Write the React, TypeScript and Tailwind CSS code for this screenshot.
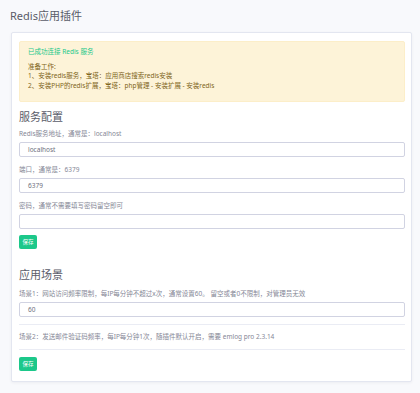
import React from 'react';

const font = { fontFamily: '"Noto Sans", "Noto Sans CJK SC", sans-serif' };

function Field({ label, value }: { label: string; value: string }) {
    return (
        <div className="flex flex-col">
            <div className="text-[6.5px] leading-[8px] text-[#858796] mb-[4px]">{label}</div>
            <div className="h-[15px] border border-[#d1d3e2] rounded-[2px] bg-white flex items-center px-[8px] text-[6.5px] text-[#6e707e]">
                {value}
            </div>
        </div>
    );
}

function SaveButton() {
    return (
        <div className="w-[18px] h-[14px] rounded-[2px] bg-[#1cc88a] text-white text-[5.5px] flex items-center justify-center">
            保存
        </div>
    );
}

export default function App() {
    return (
        <div className="min-h-[393px] bg-[#f8f9fc] pl-[11px] pr-[8px] pt-[8px] pb-[15px]" style={font}>
            <div className="text-[11px] leading-[16px] text-[#5a5c69] mb-[8px] -ml-[1px]">Redis应用插件</div>

            <div className="bg-white border border-[#e3e6f0] rounded-[2px] shadow-[0_1px_3px_rgba(58,59,69,0.06)] pt-[8px] pl-[7px] pr-[6px] pb-[10px]">
                <div className="bg-[#fdf3d8] border border-[#fceec9] rounded-[2px] pl-[8px] pt-[5px] pb-[11px] text-[6.5px] leading-[9.5px] text-[#806520]">
                    <div className="text-[#1cc88a] mb-[5px]">已成功连接 Redis 服务</div>
                    <div>准备工作:</div>
                    <div>1、安装redis服务，宝塔：应用商店搜索redis安装</div>
                    <div>2、安装PHP的redis扩展，宝塔：php管理 - 安装扩展 - 安装redis</div>
                </div>

                <div className="text-[11px] leading-[14px] text-[#5a5c69] mt-[8px] mb-[6px]">服务配置</div>
                <div className="flex flex-col gap-[9px]">
                    <Field label="Redis服务地址，通常是：localhost" value="localhost" />
                    <Field label="端口，通常是：6379" value="6379" />
                    <Field label="密码，通常不需要填写密码留空即可" value="" />
                </div>
                <div className="mt-[6px]">
                    <SaveButton />
                </div>

                <div className="text-[11px] leading-[14px] text-[#5a5c69] mt-[19px] mb-[8px]">应用场景</div>
                <Field label="场景1：网站访问频率限制，每IP每分钟不超过x次，通常设置60。 留空或者0不限制，对管理员无效" value="60" />
                <div className="border-t border-[#eaecf4] mt-[7px]" />
                <div className="text-[6.5px] leading-[8px] text-[#858796] my-[8px]">
                    场景2：发送邮件验证码频率，每IP每分钟1次，随插件默认开启，需要 emlog pro 2.3.14
                </div>
                <div className="border-t border-[#eaecf4] mb-[7px] mt-[6px]" />
                <SaveButton />
            </div>
        </div>
    );
}
